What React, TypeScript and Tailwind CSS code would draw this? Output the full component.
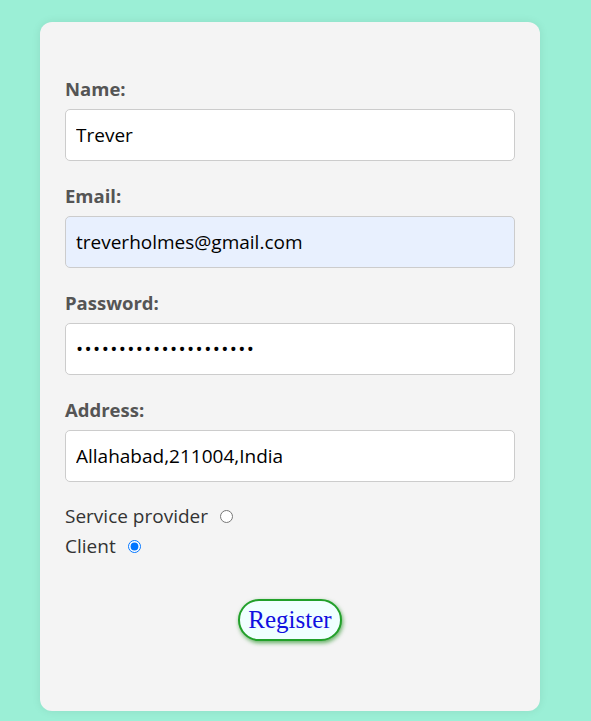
import { useState } from 'react'

const fields = [
  { label: 'Name:', type: 'text', value: 'Trever', autofill: false },
  { label: 'Email:', type: 'email', value: 'treverholmes@gmail.com', autofill: true },
  { label: 'Password:', type: 'password', value: 'trever@holmes12345678', autofill: false },
  { label: 'Address:', type: 'text', value: 'Allahabad,211004,India', autofill: false },
]

export default function App() {
  const [role, setRole] = useState('client')

  return (
    <div className="min-h-[721px] w-full bg-[#9befd6] pt-[22px] font-['Open_Sans',sans-serif]">
      <div className="ml-[40px] w-[500px] h-[689px] rounded-[12px] bg-[#f4f4f4] px-[25px] pt-[54px] shadow-[0_0_10px_rgba(0,0,0,0.08)]">
        {fields.map((f) => (
          <div key={f.label} className="mb-[22px]">
            <label className="block text-[18.5px] font-bold text-[#555] leading-[25px] mb-[8px]">{f.label}</label>
            <input
              type={f.type}
              defaultValue={f.value}
              className={`block w-full h-[52px] rounded-[5px] border border-[#ccc] px-[10px] text-[19px] text-black outline-none ${
                f.autofill ? 'bg-[#e8f0fe]' : 'bg-white'
              } ${f.type === 'password' ? 'tracking-[1.4px]' : ''}`}
            />
          </div>
        ))}

        <div className="text-[19px] text-[#333] leading-[30px] -mt-[3px]">
          <label className="flex items-center gap-[12px]">
            Service provider
            <input type="radio" name="role" checked={role === 'sp'} onChange={() => setRole('sp')} className="w-[13px] h-[13px]" />
          </label>
          <label className="flex items-center gap-[12px]">
            Client
            <input type="radio" name="role" checked={role === 'client'} onChange={() => setRole('client')} className="w-[13px] h-[13px]" />
          </label>
        </div>

        <div className="flex justify-center mt-[38px]">
          <button className="h-[42px] px-[8px] rounded-full border-2 border-[#22a02a] bg-[#f0ffff] text-[25px] leading-[30px] text-[#1010e0] font-['Liberation_Serif',serif] shadow-[1px_2px_4px_rgba(0,128,0,0.6)]">
            Register
          </button>
        </div>
      </div>
    </div>
  )
}
